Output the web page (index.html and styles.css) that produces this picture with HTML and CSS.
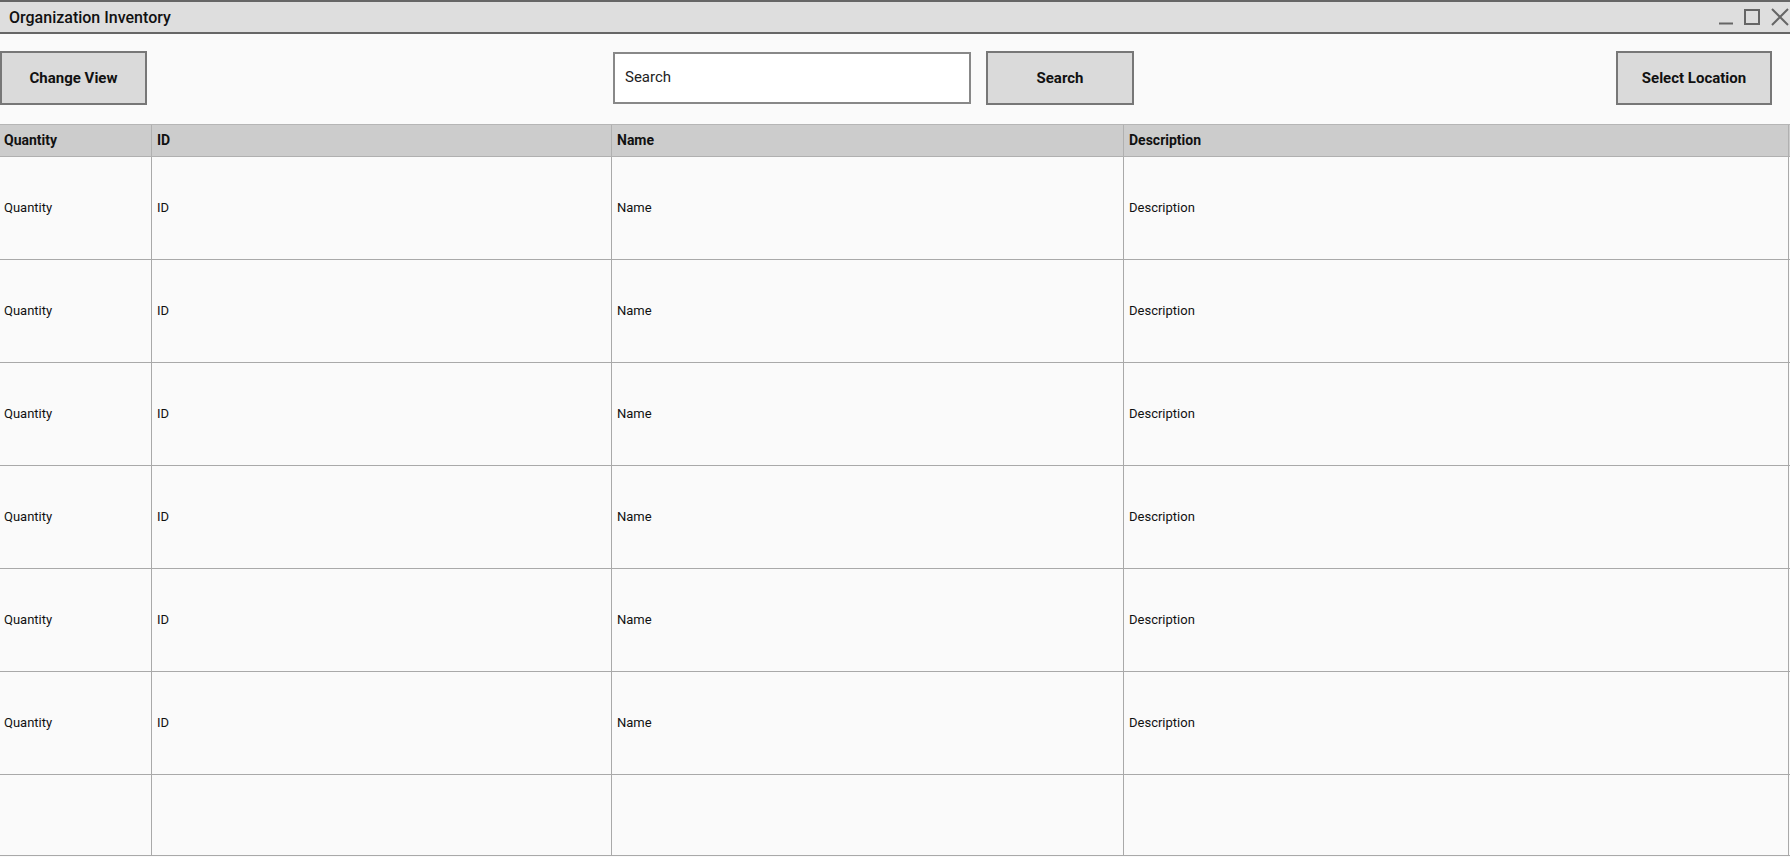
FILE: index.html
```html
<!DOCTYPE html>
<html lang="en">
<head>
<meta charset="utf-8">
<title>Organization Inventory</title>
<link rel="stylesheet" href="styles.css">
</head>
<body>
<div class="window">
  <header class="titlebar">
    <span class="title">Organization Inventory</span>
    <div class="controls">
      <svg class="ctl" width="16" height="18" viewBox="0 0 16 18"><line x1="1" y1="15.5" x2="15" y2="15.5" stroke="#666" stroke-width="2"/></svg>
      <svg class="ctl" width="18" height="18" viewBox="0 0 18 18"><rect x="2" y="2" width="14" height="14" fill="none" stroke="#666" stroke-width="2"/></svg>
      <svg class="ctl" width="20" height="18" viewBox="0 0 20 18"><path d="M2 1 L18 17 M18 1 L2 17" stroke="#666" stroke-width="2" fill="none"/></svg>
    </div>
  </header>
  <div class="toolbar">
    <button class="btn btn-change">Change View</button>
    <div class="search-group">
      <div class="search-input">Search</div>
      <button class="btn btn-search">Search</button>
    </div>
    <button class="btn btn-location">Select Location</button>
  </div>
  <div class="table">
    <div class="row head">
      <div class="cell">Quantity</div><div class="cell">ID</div><div class="cell">Name</div><div class="cell">Description</div>
    </div>
    <div class="row"><div class="cell">Quantity</div><div class="cell">ID</div><div class="cell">Name</div><div class="cell">Description</div></div>
    <div class="row"><div class="cell">Quantity</div><div class="cell">ID</div><div class="cell">Name</div><div class="cell">Description</div></div>
    <div class="row"><div class="cell">Quantity</div><div class="cell">ID</div><div class="cell">Name</div><div class="cell">Description</div></div>
    <div class="row"><div class="cell">Quantity</div><div class="cell">ID</div><div class="cell">Name</div><div class="cell">Description</div></div>
    <div class="row"><div class="cell">Quantity</div><div class="cell">ID</div><div class="cell">Name</div><div class="cell">Description</div></div>
    <div class="row"><div class="cell">Quantity</div><div class="cell">ID</div><div class="cell">Name</div><div class="cell">Description</div></div>
    <div class="row last"><div class="cell"></div><div class="cell"></div><div class="cell"></div><div class="cell"></div></div>
  </div>
</div>
</body>
</html>
```
FILE: styles.css
```css
* { box-sizing: border-box; }
html, body { margin: 0; padding: 0; }
body {
  background: #fafafa;
  font-family: Roboto, "Liberation Sans", Arial, sans-serif;
  color: #111;
  width: 1790px;
  height: 857px;
  overflow: hidden;
}
.window { display: flex; flex-direction: column; }

.titlebar {
  height: 34px;
  background: #dedede;
  border-top: 2px solid #666;
  border-bottom: 2px solid #666;
  display: flex;
  align-items: center;
  justify-content: space-between;
  padding-left: 9px;
}
.title { font-size: 16px; font-weight: 500; color: #111; }
.controls { display: flex; align-items: center; gap: 9px; margin-right: 0; height: 100%; }
.ctl { display: block; }

.toolbar {
  height: 90px;
  display: flex;
  align-items: flex-start;
  padding-top: 17px;
}
.btn {
  height: 54px;
  background: #dadada;
  border: 2px solid #777;
  font-family: Roboto, "Liberation Sans", Arial, sans-serif;
  font-size: 15px;
  font-weight: 700;
  color: #111;
  padding: 0;
  margin: 0;
}
.btn-change { width: 147px; }
.search-group { display: flex; align-items: flex-start; gap: 15px; margin-left: 466px; }
.search-input {
  width: 358px;
  height: 52px;
  margin-top: 1px;
  background: #fff;
  border: 2px solid #888;
  font-size: 15px;
  color: #222;
  display: flex;
  align-items: center;
  padding-left: 10px;
  padding-bottom: 2px;
}
.btn-search { width: 148px; }
.btn-location { width: 156px; margin-left: auto; margin-right: 18px; }

.table {
  display: flex;
  flex-direction: column;
  width: 1790px;
}
.row {
  display: grid;
  grid-template-columns: 152px 460px 512px 665px;
  height: 103px;
  border-bottom: 1px solid #a9a9a9;
  font-size: 13px;
}
.row.head {
  height: 33px;
  background: #cccccc;
  border-top: 1px solid #b5b5b5;
  border-bottom: 1px solid #b0b0b0;
  font-weight: 700;
  font-size: 14px;
}
.row.last { height: 81px; }
.cell {
  display: flex;
  align-items: center;
  padding-left: 5px;
  padding-bottom: 2px;
  border-right: 1px solid #a9a9a9;
}
.cell:first-child { padding-left: 4px; }
.row.head .cell { border-right-color: #b0b0b0; }
```
